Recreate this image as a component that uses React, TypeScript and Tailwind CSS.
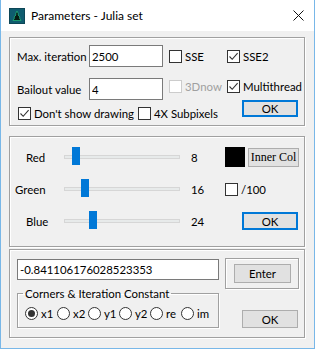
import type { ReactNode } from 'react';

const groupCls =
  'border border-[#a0a0a0] shadow-[inset_1px_1px_0_#ffffff,1px_1px_0_#ffffff]';

const CheckBox = ({ checked = false, disabled = false }: { checked?: boolean; disabled?: boolean }) => (
  <span
    className={`w-[13px] h-[13px] shrink-0 flex items-center justify-center bg-white border ${
      disabled ? 'border-[#cccccc]' : 'border-[#333333]'
    }`}
  >
    {checked && (
      <svg width="11" height="11" viewBox="0 0 11 11">
        <path d="M1.5 5.5 L4.2 8.3 L9.6 2.2" stroke="#333333" strokeWidth="1.1" fill="none" />
      </svg>
    )}
  </span>
);

const Check = ({
  label,
  checked,
  disabled,
  className = '',
}: {
  label: string;
  checked?: boolean;
  disabled?: boolean;
  className?: string;
}) => (
  <label className={`flex items-center gap-[3px] h-[13px] whitespace-nowrap ${className}`}>
    <CheckBox checked={checked} disabled={disabled} />
    <span className={disabled ? 'text-[#a0a0a0]' : ''}>{label}</span>
  </label>
);

const Radio = ({ label, checked = false, w }: { label: string; checked?: boolean; w: string }) => (
  <label className={`flex items-center gap-[3px] h-[13px] whitespace-nowrap ${w}`}>
    <span className="w-[13px] h-[13px] shrink-0 rounded-full border border-[#333333] bg-white flex items-center justify-center">
      {checked && <span className="w-[7px] h-[7px] rounded-full bg-[#333333]" />}
    </span>
    <span>{label}</span>
  </label>
);

const Button = ({
  children,
  primary = false,
  className = '',
}: {
  children: ReactNode;
  primary?: boolean;
  className?: string;
}) => (
  <button
    className={`shrink-0 bg-[#e1e1e1] flex items-center justify-center whitespace-nowrap ${
      primary ? 'border-2 border-[#0078d7]' : 'border border-[#adadad]'
    } ${className}`}
  >
    {children}
  </button>
);

const Slider = ({ at }: { at: number }) => (
  <div className="relative w-[116px] h-full flex items-center">
    <div className="w-full h-[4px] bg-[#e7eaea] border border-[#d6d6d6]" />
    <div className="absolute top-[6px] w-[8px] h-[18px] bg-[#0078d7]" style={{ left: at }} />
  </div>
);

const colours = [
  { name: 'Red', pad: 'pl-[16px]', at: 8, value: 8 },
  { name: 'Green', pad: 'pl-[5px]', at: 17, value: 16 },
  { name: 'Blue', pad: 'pl-[16px]', at: 25, value: 24 },
];

export default function App() {
  return (
    <div className="w-[315px] h-[349px] flex flex-col border-x border-b border-[#78b7e8] bg-[#f0f0f0] text-[11.4px] leading-[15px] text-black font-['Lato',sans-serif]">
      {/* title bar */}
      <div className="h-[31px] shrink-0 bg-white flex items-center pl-[8px] pr-[10px] text-[12px]">
        <svg width="16" height="16" viewBox="0 0 16 16" className="shrink-0">
          <rect width="16" height="16" fill="#0d4657" />
          <rect x="1" y="1" width="14" height="14" fill="#0f5c6e" />
          <path
            d="M8 3 L9.5 6 L9 7 L11 9 L10.5 10 L12 12.5 L4 12.5 L5.5 10 L5 9 L7 7 L6.5 6 Z"
            fill="#061c14"
            stroke="#1fb07a"
            strokeWidth="0.8"
          />
        </svg>
        <span className="ml-[6px]">Parameters - Julia set</span>
        <svg width="11" height="11" viewBox="0 0 11 11" className="ml-auto">
          <path d="M0.5 0.5 L10.5 10.5 M10.5 0.5 L0.5 10.5" stroke="#111111" strokeWidth="1" />
        </svg>
      </div>

      <div className="flex-1 flex flex-col pl-[8px] pr-[9px] pt-[6px]">
        {/* group 1 */}
        <div className={`h-[89px] flex flex-col pl-[7px] pr-[6px] pt-[7px] ${groupCls}`}>
          <div className="flex">
            <div className="flex flex-col gap-[11px]">
              <div className="flex items-center h-[22px]">
                <span className="w-[72px] whitespace-nowrap">Max. iteration</span>
                <input
                  defaultValue="2500"
                  className="w-[74px] h-[22px] bg-white border border-[#7a7a7a] pl-[2px] outline-none"
                />
              </div>
              <div className="flex items-center h-[22px]">
                <span className="w-[72px] whitespace-nowrap">Bailout value</span>
                <input
                  defaultValue="4"
                  className="w-[74px] h-[22px] bg-white border border-[#7a7a7a] pl-[2px] outline-none"
                />
              </div>
            </div>
            <div className="ml-[6px] mt-[5px] grid grid-cols-[58px_auto] gap-y-[10px]">
              <Check label="SSE" />
              <Check label="SSE2" checked />
              <Check label="3Dnow" disabled />
              <Check label="Multithread" checked />
            </div>
          </div>
          <div className="flex items-start">
            <Check label="Don't show drawing" checked className="ml-[1px] mt-[7px] w-[120px]" />
            <Check label="4X Subpixels" className="mt-[7px]" />
            <Button primary className="ml-auto w-[56px] h-[17px]">
              OK
            </Button>
          </div>
        </div>

        {/* group 2 */}
        <div className={`h-[111px] mt-[10px] flex flex-col pt-[4px] ${groupCls}`}>
          {colours.map((c, i) => (
            <div key={c.name} className="h-[32px] flex items-center">
              <span className={`w-[54px] shrink-0 ${c.pad}`}>{c.name}</span>
              <Slider at={c.at} />
              <span className="w-[45px] shrink-0 pl-[11px]">{c.value}</span>
              {i === 0 && (
                <>
                  <span className="w-[20px] h-[20px] bg-black shrink-0" />
                  <Button className="ml-[3px] w-[51px] h-[19px] text-[12px] font-['Liberation_Serif',serif]">Inner Col</Button>
                </>
              )}
              {i === 1 && <Check label="/100" />}
              {i === 2 && (
                <Button primary className="ml-[17px] w-[56px] h-[18px]">
                  OK
                </Button>
              )}
            </div>
          ))}
        </div>

        {/* group 3 */}
        <div className={`h-[89px] mt-[2px] flex pl-[7px] ${groupCls}`}>
          <div className="w-[202px] shrink-0 flex flex-col">
            <input
              defaultValue="-0.841106176028523353"
              className="mt-[9px] h-[21px] w-full bg-white border border-[#7a7a7a] pl-[2px] outline-none"
            />
            <fieldset className="mt-[6px] h-[42px] border border-[#a0a0a0] shadow-[inset_1px_1px_0_#ffffff,1px_1px_0_#ffffff]">
              <legend className="ml-[5px] px-[2px]">Corners &amp; Iteration Constant</legend>
              <div className="flex pt-[6px] pl-[7px]">
                <Radio label="x1" checked w="w-[32px]" />
                <Radio label="x2" w="w-[31px]" />
                <Radio label="y1" w="w-[31px]" />
                <Radio label="y2" w="w-[31px]" />
                <Radio label="re" w="w-[31px]" />
                <Radio label="im" w="w-[31px]" />
              </div>
            </fieldset>
          </div>
          <div className="ml-[6px] flex flex-col">
            <div className={`mt-[8px] w-[74px] h-[31px] pl-[8px] pt-[5px] ${groupCls}`}>
              <Button className="w-[57px] h-[19px]">Enter</Button>
            </div>
            <Button className="mt-[21px] ml-[17px] w-[56px] h-[18px]">OK</Button>
          </div>
        </div>
      </div>
    </div>
  );
}
